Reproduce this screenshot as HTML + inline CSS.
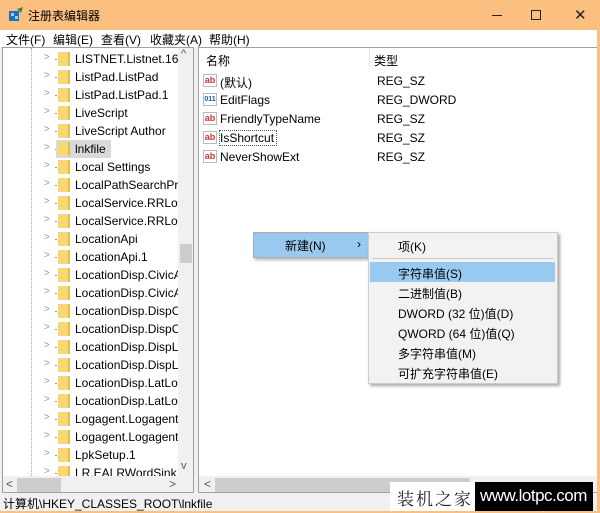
<!DOCTYPE html>
<html><head><meta charset="utf-8">
<style>
*{margin:0;padding:0;box-sizing:border-box}
body{width:600px;height:513px;overflow:hidden;background:#f0f0f0;font-family:"Liberation Sans","Noto Sans CJK SC",sans-serif;font-size:12px;color:#000;position:relative}
.abs{position:absolute}
#title{left:0;top:0;width:600px;height:30px;background:#fbbf80}
#menu{left:0;top:30px;width:600px;height:17px;background:#fff}
#menu span{position:absolute;top:1px;font-size:12px}
#left{left:2px;top:47px;width:192px;height:446px;background:#fff;border:1px solid #a0a0a0;overflow:hidden}
#right{left:198px;top:47px;width:400px;height:446px;background:#fff;border:1px solid #a0a0a0;overflow:hidden}
.row{position:absolute;left:0;height:18px;width:180px;font-size:12px;white-space:nowrap}
.row .chev{position:absolute;left:41px;top:2px;color:#999;font-size:10px}
.row .dot{position:absolute;left:52px;top:9px;width:4px;border-top:1px dotted #999}
.row .fold{position:absolute;left:55px;top:2px;width:12px;height:14px;background:#f8d775;border-right:2px solid #e9b949}
.row .t{position:absolute;left:72px;top:2px}
#vline{left:28px;top:0;height:430px;border-left:1px dotted #aaa}
.vals{position:absolute;left:4px;height:19px;font-size:12px;white-space:nowrap}
.ico{position:absolute;left:0;top:2px;width:14px;height:13px;border:1px solid #bbb;background:#fff;color:#c33;font-size:9px;font-weight:bold;line-height:11px;text-align:center}
.vals .n{position:absolute;left:17px;top:2px}
.vals .ty{position:absolute;left:174px;top:2px}
.m{position:absolute;font-size:12px;white-space:nowrap}
</style></head><body>
<div id="title" class="abs">
 <svg class="abs" style="left:7px;top:7px" width="18" height="16"><rect x="2" y="4" width="10" height="10" fill="#1e6fbf"/><rect x="4" y="6" width="3" height="3" fill="#9cf"/><rect x="8" y="9" width="3" height="3" fill="#9cf"/><path d="M10 2 L16 0 L14 6 Z" fill="#2a8a3a"/></svg>
 <span class="abs" style="left:28px;top:7px;font-size:12px">注册表编辑器</span>
 <div class="abs" style="left:492px;top:15px;width:10px;border-top:1px solid #222"></div>
 <div class="abs" style="left:531px;top:10px;width:10px;height:10px;border:1px solid #222"></div>
 <span class="abs" style="left:574px;top:6px;font-size:15px;color:#222">✕</span>
</div>
<div id="menu" class="abs">
 <span style="left:6px">文件(F)</span><span style="left:53px">编辑(E)</span><span style="left:101px">查看(V)</span><span style="left:150px">收藏夹(A)</span><span style="left:209px">帮助(H)</span>
</div>
<div id="left" class="abs">
 <div id="vline" class="abs"></div>
 <div class="row" style="top:2px"><span class="chev">&gt;</span><span class="dot"></span><span class="fold"></span><span class="t">LISTNET.Listnet.16</span></div>
 <div class="row" style="top:20px"><span class="chev">&gt;</span><span class="dot"></span><span class="fold"></span><span class="t">ListPad.ListPad</span></div>
 <div class="row" style="top:38px"><span class="chev">&gt;</span><span class="dot"></span><span class="fold"></span><span class="t">ListPad.ListPad.1</span></div>
 <div class="row" style="top:56px"><span class="chev">&gt;</span><span class="dot"></span><span class="fold"></span><span class="t">LiveScript</span></div>
 <div class="row" style="top:74px"><span class="chev">&gt;</span><span class="dot"></span><span class="fold"></span><span class="t">LiveScript Author</span></div>
 <div class="row" style="top:92px"><span class="chev">&gt;</span><span class="dot"></span><div class="abs" style="left:53px;top:0;width:55px;height:18px;background:#d9d9d9"></div><span class="fold"></span><span class="t">lnkfile</span></div>
 <div class="row" style="top:110px"><span class="chev">&gt;</span><span class="dot"></span><span class="fold"></span><span class="t">Local Settings</span></div>
 <div class="row" style="top:128px"><span class="chev">&gt;</span><span class="dot"></span><span class="fold"></span><span class="t">LocalPathSearchPro</span></div>
 <div class="row" style="top:146px"><span class="chev">&gt;</span><span class="dot"></span><span class="fold"></span><span class="t">LocalService.RRLoca</span></div>
 <div class="row" style="top:164px"><span class="chev">&gt;</span><span class="dot"></span><span class="fold"></span><span class="t">LocalService.RRLoca</span></div>
 <div class="row" style="top:182px"><span class="chev">&gt;</span><span class="dot"></span><span class="fold"></span><span class="t">LocationApi</span></div>
 <div class="row" style="top:200px"><span class="chev">&gt;</span><span class="dot"></span><span class="fold"></span><span class="t">LocationApi.1</span></div>
 <div class="row" style="top:218px"><span class="chev">&gt;</span><span class="dot"></span><span class="fold"></span><span class="t">LocationDisp.CivicAd</span></div>
 <div class="row" style="top:236px"><span class="chev">&gt;</span><span class="dot"></span><span class="fold"></span><span class="t">LocationDisp.CivicAd</span></div>
 <div class="row" style="top:254px"><span class="chev">&gt;</span><span class="dot"></span><span class="fold"></span><span class="t">LocationDisp.DispCi</span></div>
 <div class="row" style="top:272px"><span class="chev">&gt;</span><span class="dot"></span><span class="fold"></span><span class="t">LocationDisp.DispCi</span></div>
 <div class="row" style="top:290px"><span class="chev">&gt;</span><span class="dot"></span><span class="fold"></span><span class="t">LocationDisp.DispLa</span></div>
 <div class="row" style="top:308px"><span class="chev">&gt;</span><span class="dot"></span><span class="fold"></span><span class="t">LocationDisp.DispLa</span></div>
 <div class="row" style="top:326px"><span class="chev">&gt;</span><span class="dot"></span><span class="fold"></span><span class="t">LocationDisp.LatLor</span></div>
 <div class="row" style="top:344px"><span class="chev">&gt;</span><span class="dot"></span><span class="fold"></span><span class="t">LocationDisp.LatLor</span></div>
 <div class="row" style="top:362px"><span class="chev">&gt;</span><span class="dot"></span><span class="fold"></span><span class="t">Logagent.Logagent</span></div>
 <div class="row" style="top:380px"><span class="chev">&gt;</span><span class="dot"></span><span class="fold"></span><span class="t">Logagent.Logagent</span></div>
 <div class="row" style="top:398px"><span class="chev">&gt;</span><span class="dot"></span><span class="fold"></span><span class="t">LpkSetup.1</span></div>
 <div class="row" style="top:416px"><span class="chev">&gt;</span><span class="dot"></span><span class="fold"></span><span class="t">LR.EALRWordSink</span></div>
 <div class="abs" style="left:175px;top:0;width:16px;height:428px;background:#f0f0f0"></div>
 <span class="abs" style="left:178px;top:0;font-size:11px;color:#555">^</span>
 <div class="abs" style="left:177px;top:196px;width:12px;height:19px;background:#cdcdcd"></div>
 <span class="abs" style="left:178px;top:412px;font-size:11px;color:#555">v</span>
 <div class="abs" style="left:0;top:428px;width:191px;height:17px;background:#f0f0f0"></div>
 <span class="abs" style="left:3px;top:429px;font-size:12px;color:#555">&lt;</span>
 <div class="abs" style="left:14px;top:430px;width:44px;height:14px;background:#cdcdcd"></div>
 <span class="abs" style="left:166px;top:429px;font-size:12px;color:#555">&gt;</span>
</div>
<div id="right" class="abs">
 <div class="abs" style="left:0;top:0;width:400px;height:20px;background:#fff"></div>
 <span class="abs" style="left:7px;top:4px">名称</span>
 <div class="abs" style="left:170px;top:0;height:20px;border-left:1px solid #e5e5e5"></div>
 <span class="abs" style="left:175px;top:4px">类型</span>
 <div class="vals" style="top:24px"><span class="ico">ab</span><span class="n">(默认)</span><span class="ty">REG_SZ</span></div>
 <div class="vals" style="top:43px"><span class="ico" style="color:#2255aa;font-size:7px">011</span><span class="n">EditFlags</span><span class="ty">REG_DWORD</span></div>
 <div class="vals" style="top:62px"><span class="ico">ab</span><span class="n">FriendlyTypeName</span><span class="ty">REG_SZ</span></div>
 <div class="vals" style="top:81px"><span class="ico">ab</span><span class="n" style="border:1px dotted #555;top:1px;padding:0 2px 0 0;left:16px">IsShortcut</span><span class="ty">REG_SZ</span></div>
 <div class="vals" style="top:100px"><span class="ico">ab</span><span class="n">NeverShowExt</span><span class="ty">REG_SZ</span></div>
 <div class="abs" style="left:0;top:428px;width:398px;height:17px;background:#f0f0f0"></div>
 <span class="abs" style="left:5px;top:429px;color:#555">&lt;</span>
 <div class="abs" style="left:16px;top:430px;width:255px;height:14px;background:#cdcdcd"></div>
</div>
<span class="abs" style="left:3px;top:495px;font-size:12px">计算机\HKEY_CLASSES_ROOT\lnkfile</span>
<div class="abs" style="left:0;top:511px;width:600px;height:2px;background:#fbbf80"></div>
<div class="abs" style="left:597px;top:30px;width:3px;height:483px;background:#fbbf80"></div>
<div class="abs" style="left:390px;top:482px;width:85px;height:29px;background:#fff"></div>
<span class="abs" style="left:397px;top:485px;font-size:17px;font-family:'Noto Serif CJK SC',serif;letter-spacing:2px;color:#222">装机之家</span>
<div class="abs" style="left:475px;top:482px;width:118px;height:29px;background:#000"></div>
<span class="abs" style="left:480px;top:486px;font-size:17px;color:#fff;letter-spacing:-0.5px">www.lotpc.com</span>
<div class="abs" style="left:253px;top:232px;width:116px;height:26px;background:#99c9ef;border:1px solid #aab;box-shadow:2px 2px 3px rgba(0,0,0,.3)"></div>
<span class="m" style="left:285px;top:237px">新建(N)</span>
<span class="m" style="left:357px;top:237px">›</span>
<div class="abs" style="left:368px;top:232px;width:190px;height:152px;background:#f2f2f2;border:1px solid #ccc;box-shadow:2px 2px 3px rgba(0,0,0,.35)"></div>
<span class="m" style="left:398px;top:238px">项(K)</span>
<div class="abs" style="left:372px;top:258px;width:182px;border-top:1px solid #ccc"></div>
<div class="abs" style="left:370px;top:262px;width:185px;height:20px;background:#99c9ef"></div>
<span class="m" style="left:398px;top:265px">字符串值(S)</span>
<span class="m" style="left:398px;top:285px">二进制值(B)</span>
<span class="m" style="left:398px;top:305px">DWORD (32 位)值(D)</span>
<span class="m" style="left:398px;top:325px">QWORD (64 位)值(Q)</span>
<span class="m" style="left:398px;top:345px">多字符串值(M)</span>
<span class="m" style="left:398px;top:365px">可扩充字符串值(E)</span>
</body></html>
